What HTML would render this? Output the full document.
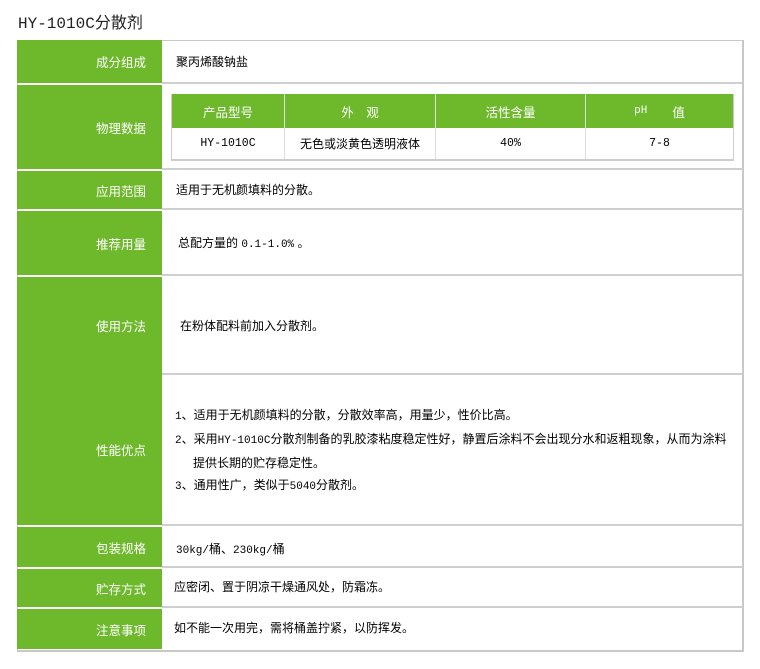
<!DOCTYPE html>
<html><head><meta charset="utf-8"><style>
body{margin:0;background:#fff;width:760px;height:669px;position:relative;font-family:"Liberation Sans","Noto Sans CJK SC","WenQuanYi Zen Hei",sans-serif;font-size:12px;color:#000;overflow:hidden}
.a{position:absolute}
.m{font-family:"Liberation Mono",monospace;font-size:11px}
.title{left:18px;top:9px;font-size:16px;font-family:"Liberation Mono","Noto Sans CJK SC",monospace;color:#222}
.outer{left:17px;top:40px;width:724px;height:609px;border:1px solid #c8c8c8;border-bottom:2px solid #c8c8c8;border-right:2px solid #c8c8c8}
.g{position:absolute;left:17px;width:145px;background:#6eb92b;color:#fff;text-align:right;box-sizing:border-box;padding-right:16px;display:flex;align-items:center;justify-content:flex-end;font-size:12.5px}
.line{position:absolute;left:162px;width:580px;height:2px;background:#cfcfcf}
.t{position:absolute;left:176px;font-size:12px}
.ih{position:absolute;top:94px;height:34px;background:#6eb92b;color:#fff;display:flex;align-items:center;justify-content:center;font-size:12.5px}
.id{position:absolute;top:128px;height:31px;display:flex;align-items:center;justify-content:center;font-size:11.5px}
</style></head><body>
<div class="a title">HY-1010C分散剂</div>
<div class="a outer"></div>
<div class="g" style="top:40px;height:43px">成分组成</div>
<div class="g" style="top:85px;height:84px">物理数据</div>
<div class="g" style="top:171px;height:38px">应用范围</div>
<div class="g" style="top:211px;height:64px">推荐用量</div>
<div class="g" style="top:277px;height:97px">使用方法</div>
<div class="g" style="top:374px;height:151px">性能优点</div>
<div class="g" style="top:527px;height:40px">包装规格</div>
<div class="g" style="top:569px;height:38px">贮存方式</div>
<div class="g" style="top:609px;height:40px">注意事项</div>
<div class="line" style="top:82px"></div><div class="line" style="top:168px"></div><div class="line" style="top:208px"></div><div class="line" style="top:274px"></div><div class="line" style="top:373px"></div><div class="line" style="top:524px"></div><div class="line" style="top:566px"></div><div class="line" style="top:606px"></div>
<div class="t" style="top:53px">聚丙烯酸钠盐</div>
<div class="a" style="left:171px;top:94px;width:561px;height:64px;border:1px solid #ccc;border-bottom:2px solid #ccc"></div>
<div class="ih" style="left:172px;width:112px">产品型号</div>
<div class="ih" style="left:285px;width:150px">外　观</div>
<div class="ih" style="left:436px;width:149px">活性含量</div>
<div class="ih" style="left:586px;width:147px"><span class="m">pH</span>　　值</div>
<div class="a" style="left:284px;top:94px;width:1px;height:65px;background:#ddd"></div>
<div class="a" style="left:435px;top:94px;width:1px;height:65px;background:#ddd"></div>
<div class="a" style="left:585px;top:94px;width:1px;height:65px;background:#ddd"></div>
<div class="id m" style="left:172px;width:112px">HY-1010C</div>
<div class="id" style="left:285px;width:150px;font-size:12px">无色或淡黄色透明液体</div>
<div class="id m" style="left:436px;width:149px">40%</div>
<div class="id m" style="left:586px;width:147px">7-8</div>
<div class="t" style="top:181px">适用于无机颜填料的分散。</div>
<div class="t" style="top:234px;left:178px">总配方量的 <span class="m">0.1-1.0%</span> 。</div>
<div class="t" style="top:317px;left:180px">在粉体配料前加入分散剂。</div>
<div class="t" style="top:404px;line-height:22px;left:175px"><span class="m">1</span>、适用于无机颜填料的分散，分散效率高，用量少，性价比高。<br><span class="m">2</span>、采用<span class="m">HY-1010C</span>分散剂制备的乳胶漆粘度稳定性好，静置后涂料不会出现分水和返粗现象，从而为涂料<br><span style="padding-left:18px">提供长期的贮存稳定性。</span><br><span class="m">3</span>、通用性广，类似于<span class="m">5040</span>分散剂。</div>
<div class="t" style="top:540px"><span class="m">30kg/</span>桶、<span class="m">230kg/</span>桶</div>
<div class="t" style="top:578px;left:174px">应密闭、置于阴凉干燥通风处，防霜冻。</div>
<div class="t" style="top:619px;left:174px">如不能一次用完，需将桶盖拧紧，以防挥发。</div>
</body></html>
